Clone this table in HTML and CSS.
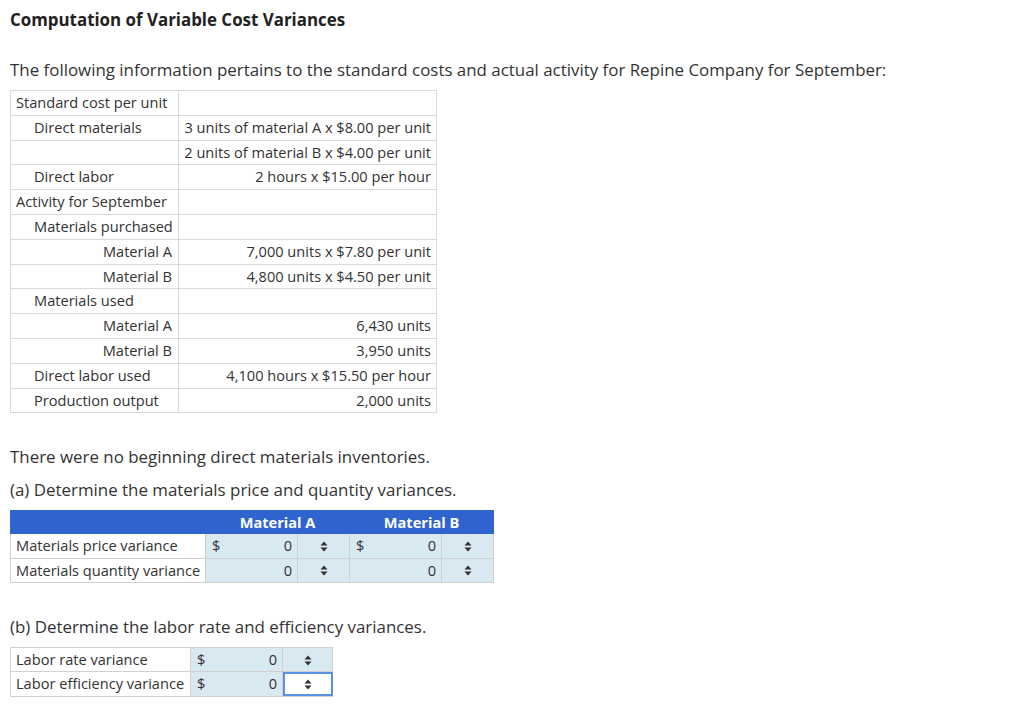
FILE: index.html
```html
<!DOCTYPE html>
<html>
<head>
<meta charset="utf-8">
<link rel="stylesheet" href="styles.css">
</head>
<body>
<div class="page">
  <h1 class="title">Computation of Variable Cost Variances</h1>
  <p class="intro">The following information pertains to the standard costs and actual activity for Repine Company for September:</p>
  <table class="data">
    <colgroup><col class="c-lbl"><col class="c-val"></colgroup>
    <tr><td class="l0">Standard cost per unit</td><td class="val"></td></tr>
    <tr><td class="l1">Direct materials</td><td class="val">3 units of material A x $8.00 per unit</td></tr>
    <tr><td class="l1"></td><td class="val">2 units of material B x $4.00 per unit</td></tr>
    <tr><td class="l1">Direct labor</td><td class="val">2 hours x $15.00 per hour</td></tr>
    <tr><td class="l0">Activity for September</td><td class="val"></td></tr>
    <tr><td class="l1">Materials purchased</td><td class="val"></td></tr>
    <tr><td class="l2">Material A</td><td class="val">7,000 units x $7.80 per unit</td></tr>
    <tr><td class="l2">Material B</td><td class="val">4,800 units x $4.50 per unit</td></tr>
    <tr><td class="l1">Materials used</td><td class="val"></td></tr>
    <tr><td class="l2">Material A</td><td class="val">6,430 units</td></tr>
    <tr><td class="l2">Material B</td><td class="val">3,950 units</td></tr>
    <tr><td class="l1">Direct labor used</td><td class="val">4,100 hours x $15.50 per hour</td></tr>
    <tr><td class="l1">Production output</td><td class="val">2,000 units</td></tr>
  </table>
  <p class="note">There were no beginning direct materials inventories.</p>
  <p class="q">(a) Determine the materials price and quantity variances.</p>
  <table class="var mat">
    <colgroup><col class="m-lbl"><col class="m-inp"><col class="m-sel"><col class="m-inp"><col class="m-sel"></colgroup>
    <tr class="head"><th></th><th colspan="2">Material A</th><th colspan="2">Material B</th></tr>
    <tr>
      <td class="rl">Materials price variance</td>
      <td class="inp"><span class="cur">$</span><span class="num">0</span></td>
      <td class="sel"><svg width="8" height="11" viewBox="0 0 8 11"><path d="M4 0.5 L7.5 4.5 H0.5 Z M4 10.5 L7.5 6.5 H0.5 Z" fill="#333"/></svg></td>
      <td class="inp"><span class="cur">$</span><span class="num">0</span></td>
      <td class="sel"><svg width="8" height="11" viewBox="0 0 8 11"><path d="M4 0.5 L7.5 4.5 H0.5 Z M4 10.5 L7.5 6.5 H0.5 Z" fill="#333"/></svg></td>
    </tr>
    <tr>
      <td class="rl">Materials quantity variance</td>
      <td class="inp"><span class="cur"></span><span class="num">0</span></td>
      <td class="sel"><svg width="8" height="11" viewBox="0 0 8 11"><path d="M4 0.5 L7.5 4.5 H0.5 Z M4 10.5 L7.5 6.5 H0.5 Z" fill="#333"/></svg></td>
      <td class="inp"><span class="cur"></span><span class="num">0</span></td>
      <td class="sel"><svg width="8" height="11" viewBox="0 0 8 11"><path d="M4 0.5 L7.5 4.5 H0.5 Z M4 10.5 L7.5 6.5 H0.5 Z" fill="#333"/></svg></td>
    </tr>
  </table>
  <p class="q qb">(b) Determine the labor rate and efficiency variances.</p>
  <table class="var lab">
    <colgroup><col class="b-lbl"><col class="b-inp"><col class="b-sel"></colgroup>
    <tr>
      <td class="rl">Labor rate variance</td>
      <td class="inp"><span class="cur">$</span><span class="num">0</span></td>
      <td class="sel"><svg width="8" height="11" viewBox="0 0 8 11"><path d="M4 0.5 L7.5 4.5 H0.5 Z M4 10.5 L7.5 6.5 H0.5 Z" fill="#333"/></svg></td>
    </tr>
    <tr>
      <td class="rl">Labor efficiency variance</td>
      <td class="inp"><span class="cur">$</span><span class="num">0</span></td>
      <td class="sel focus"><svg width="8" height="11" viewBox="0 0 8 11"><path d="M4 0.5 L7.5 4.5 H0.5 Z M4 10.5 L7.5 6.5 H0.5 Z" fill="#333"/></svg></td>
    </tr>
  </table>
</div>
</body>
</html>
```

FILE: styles.css
```css
html, body {
  margin: 0;
  padding: 0;
  background: #fff;
}
body {
  font-family: "Open Sans", "Liberation Sans", sans-serif;
  color: #333;
}
.page {
  padding: 8px 10px 0 10px;
}
.title {
  margin: 0;
  font-size: 16.9px;
  font-weight: 700;
  line-height: 24px;
  color: #222;
}
.intro {
  margin: 26px 0 0 0;
  font-size: 16.9px;
  line-height: 24px;
}
table {
  border-collapse: collapse;
  table-layout: fixed;
}
.data {
  margin-top: 8px;
  font-size: 14.6px;
  width: 426px;
}
.c-lbl { width: 168px; }
.c-val { width: 258px; }
.data td {
  border: 1px solid #d9d9d9;
  padding: 0;
  height: 23.8px;
  line-height: 23.8px;
  white-space: nowrap;
}
.data .l0 { padding-left: 5px; }
.data .l1 { padding-left: 23px; }
.data .l2 { text-align: right; padding-right: 6px; }
.data .val {
  text-align: right;
  padding-right: 5px;
}
.note {
  margin: 32px 0 0 0;
  font-size: 16.9px;
  line-height: 24px;
}
.q {
  margin: 9px 0 0 0;
  font-size: 16.9px;
  line-height: 24px;
}
.qb {
  margin-top: 32px;
}
.var {
  font-size: 14.6px;
  margin-top: 8px;
}
.mat { width: 482px; }
.m-lbl { width: 195px; }
.m-inp { width: 92px; }
.m-sel { width: 52px; }
.var td {
  border: 1px solid #d0d0d0;
  padding: 0;
  height: 23.3px;
  line-height: 23.3px;
  white-space: nowrap;
}
.var .head th {
  background: #2f64cf;
  color: #fff;
  font-weight: 700;
  font-size: 14.6px;
  height: 22px;
  line-height: 22px;
  padding: 0;
  border: 1px solid #2f64cf;
  text-align: center;
}
.var .rl {
  padding-left: 5px;
  padding-right: 2px;
  background: #fff;
}
.var .inp {
  background: #d9e9f1;
  padding: 0 5px 0 6px;
}
.var .inp .cur {
  display: inline-block;
  width: 20px;
}
.var .inp .num {
  float: right;
}
.var .sel {
  background: #d9e9f1;
  text-align: center;
}
.var .sel svg {
  display: inline-block;
  vertical-align: middle;
  position: relative;
  top: -1px;
}
.lab {
  margin-top: 8px;
  width: 322px;
}
.b-lbl { width: 180px; }
.b-inp { width: 92px; }
.b-sel { width: 50px; }
.var .sel.focus {
  background: #fff;
  outline: 2px solid #5b8fe8;
  outline-offset: -2px;
}
```
